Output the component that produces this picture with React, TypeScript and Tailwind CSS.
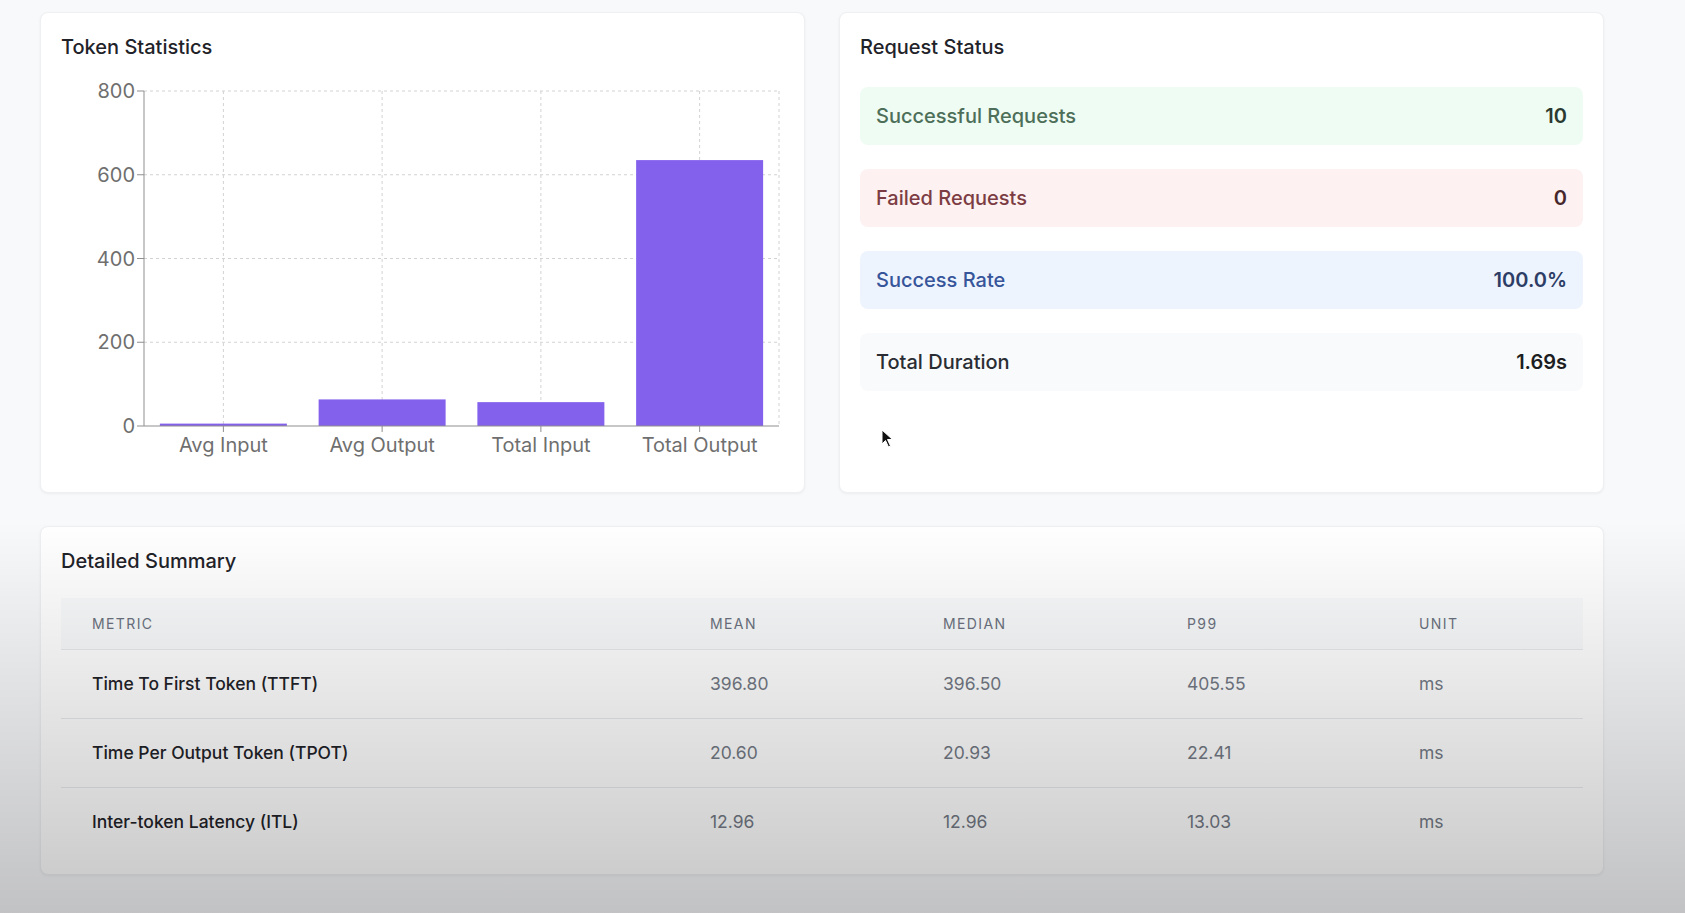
const bars = [
  { label: "Avg Input", value: 5.7 },
  { label: "Avg Output", value: 63.5 },
  { label: "Total Input", value: 57 },
  { label: "Total Output", value: 635 },
];

const statusRows = [
  { label: "Successful Requests", value: "10", row: "bg-[#effcf3]", labelColor: "text-[#4d6f59]", valueColor: "text-[#2b3a30]" },
  { label: "Failed Requests", value: "0", row: "bg-[#fdf1f1]", labelColor: "text-[#7c3c43]", valueColor: "text-[#46272b]" },
  { label: "Success Rate", value: "100.0%", row: "bg-[#eef4fe]", labelColor: "text-[#37559a]", valueColor: "text-[#2c3d66]" },
  { label: "Total Duration", value: "1.69s", row: "bg-[#f9fafb]", labelColor: "text-[#2a2d33]", valueColor: "text-[#1c1e22]" },
];

const summary = [
  { metric: "Time To First Token (TTFT)", mean: "396.80", median: "396.50", p99: "405.55", unit: "ms" },
  { metric: "Time Per Output Token (TPOT)", mean: "20.60", median: "20.93", p99: "22.41", unit: "ms" },
  { metric: "Inter-token Latency (ITL)", mean: "12.96", median: "12.96", p99: "13.03", unit: "ms" },
];

// chart geometry (svg units = px)
const AX = 83;
const RIGHT = 718;
const TOP = 18;
const BASE = 353;
const MAX = 800;
const band = (RIGHT - AX) / bars.length;
const yOf = (v: number) => BASE - (v / MAX) * (BASE - TOP);

function TokenChart() {
  const ticks = [0, 200, 400, 600, 800];
  return (
    <svg width="725" height="399" className="block">
      {/* grid */}
      {ticks.slice(1).map((t) => (
        <line key={t} x1={AX} x2={RIGHT} y1={yOf(t)} y2={yOf(t)} stroke="#d2d2d2" strokeDasharray="3 3" />
      ))}
      {bars.map((b, i) => {
        const cx = AX + band * i + band / 2;
        return <line key={b.label} x1={cx} x2={cx} y1={TOP} y2={BASE} stroke="#d2d2d2" strokeDasharray="3 3" />;
      })}
      <line x1={RIGHT} x2={RIGHT} y1={TOP} y2={BASE} stroke="#d2d2d2" strokeDasharray="3 3" />

      {/* bars */}
      {bars.map((b, i) => {
        const x = AX + band * i + band * 0.1;
        const y = yOf(b.value);
        return <rect key={b.label} x={x} y={y} width={band * 0.8} height={BASE - y} fill="#8461ed" />;
      })}

      {/* y axis */}
      <line x1={AX} x2={AX} y1={TOP} y2={BASE} stroke="#8f8f8f" />
      {ticks.map((t) => (
        <g key={t}>
          <line x1={AX - 7} x2={AX} y1={yOf(t)} y2={yOf(t)} stroke="#8f8f8f" />
          <text x={AX - 9} y={yOf(t)} dy="0.35em" textAnchor="end" fontSize="20" fill="#6f6f6f">
            {t}
          </text>
        </g>
      ))}

      {/* x axis */}
      <line x1={AX} x2={RIGHT} y1={BASE} y2={BASE} stroke="#8f8f8f" />
      {bars.map((b, i) => {
        const cx = AX + band * i + band / 2;
        return (
          <g key={b.label}>
            <line x1={cx} x2={cx} y1={BASE} y2={BASE + 6} stroke="#8f8f8f" />
            <text x={cx} y={BASE + 19} dy="0.35em" textAnchor="middle" fontSize="20" fill="#6f6f6f">
              {b.label}
            </text>
          </g>
        );
      })}
    </svg>
  );
}

function Card({ title, children, className = "" }: { title: string; children: React.ReactNode; className?: string }) {
  return (
    <div className={`bg-white rounded-lg border border-[#eef0f2] shadow-[0_1px_3px_rgba(0,0,0,0.05)] p-5 ${className}`}>
      <h3 className="text-[20px] leading-[28px] font-medium text-[#1f2329]">{title}</h3>
      {children}
    </div>
  );
}

export default function App() {
  return (
    <div className="relative h-[913px] w-full overflow-hidden bg-[#f8f9fb] font-['Inter','Noto_Sans',sans-serif]">
      <div className="w-[1564px] ml-[40px] pt-[12px]">
        <div className="grid grid-cols-2 gap-[34px]">
          <Card title="Token Statistics">
            <div className="mt-3">
              <TokenChart />
            </div>
          </Card>

          <Card title="Request Status">
            <div className="mt-[26px] flex flex-col gap-6">
              {statusRows.map((r) => (
                <div key={r.label} className={`h-[58px] rounded-lg px-4 flex items-center justify-between ${r.row}`}>
                  <span className={`text-[20px] font-medium ${r.labelColor}`}>{r.label}</span>
                  <span className={`text-[20px] font-semibold ${r.valueColor}`}>{r.value}</span>
                </div>
              ))}
            </div>
          </Card>
        </div>

        <Card title="Detailed Summary" className="mt-[33px] pb-[17px]">
          <div className="mt-[23px]">
            <div className="grid grid-cols-[618px_233px_244px_232px_196px] h-[52px] items-center bg-[#f9fafb] border-b border-[#e8eaed] text-[14px] tracking-[0.1em] text-[#6b7280]">
              <div className="pl-[31px]">METRIC</div>
              <div className="pl-[31px]">MEAN</div>
              <div className="pl-[31px]">MEDIAN</div>
              <div className="pl-[31px]">P99</div>
              <div className="pl-[31px]">UNIT</div>
            </div>
            {summary.map((s, i) => (
              <div
                key={s.metric}
                className={`grid grid-cols-[618px_233px_244px_232px_196px] h-[69px] items-center text-[17.5px] ${
                  i < summary.length - 1 ? "border-b border-[#e8eaed]" : ""
                }`}
              >
                <div className="pl-[31px] font-medium text-[#1f2329]">{s.metric}</div>
                <div className="pl-[31px] text-[#737985]">{s.mean}</div>
                <div className="pl-[31px] text-[#737985]">{s.median}</div>
                <div className="pl-[31px] text-[#737985]">{s.p99}</div>
                <div className="pl-[31px] text-[#737985]">{s.unit}</div>
              </div>
            ))}
          </div>
        </Card>
      </div>

      {/* mouse pointer */}
      <svg className="absolute left-[881px] top-[429px]" width="14" height="20" viewBox="0 0 14 20">
        <path d="M1 1 L1 15 L4.5 11.5 L7.5 18 L9.5 17 L6.5 10.5 L11.5 10.5 Z" fill="#111" stroke="#fff" strokeWidth="1" />
      </svg>

      {/* video-frame fade */}
      <div className="pointer-events-none absolute inset-0 bg-linear-to-b from-transparent from-[57%] to-black/22" />
    </div>
  );
}
